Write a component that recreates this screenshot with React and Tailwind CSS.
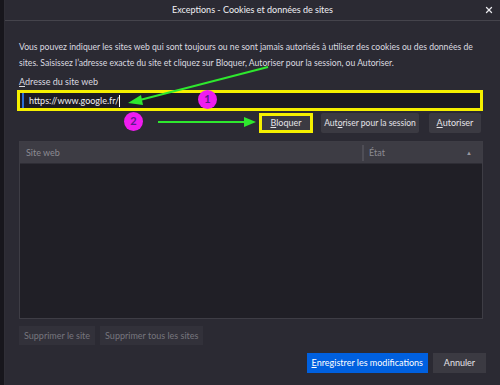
import { X } from "lucide-react";

export default function App() {
  return (
    <div className="w-[500px] h-[385px] bg-[#1c1b22] flex font-['Lato',sans-serif] text-[9px] text-[#e4e3e8] overflow-hidden">
      <div className="w-[5px] bg-[#17161c] border-r border-[#2f2e36]" />
      <div className="relative flex-1 bg-[#2b2a33] flex flex-col">
        {/* title bar */}
        <div className="h-[21px] flex items-center justify-center relative border-b border-[#45444c] bg-[#2b2a33]">
          <span className="text-[9px] text-[#f0f0f4]">Exceptions - Cookies et données de sites</span>
          <X className="absolute right-[6px] top-[5px] w-[10px] h-[10px] text-[#e8e8ec]" strokeWidth={3} />
        </div>

        <div className="pl-[14px] pr-[19px] pt-[18px] flex flex-col">
          <p className="leading-[16px] text-[8.6px] text-[#dcdbe0] mr-[-6px]">
            Vous pouvez indiquer les sites web qui sont toujours ou ne sont jamais autorisés à utiliser des cookies ou des données de sites. Saisissez l’adresse exacte du site et cliquez sur Bloquer, Autoriser pour la session, ou Autoriser.
          </p>

          <label className="mt-[4px] leading-[14px] text-[#dcdbe0]">
            <span className="underline">A</span>dresse du site web
          </label>

          <div className="mt-[1px] border-[3px] border-[#f5f000] mx-[-2px] h-[21px] flex items-center bg-[#1c1b22]">
            <div className="ml-[2px] pl-[5px] h-full flex items-center border-l-2 border-[#2a6fd6] text-[#f0f0f4]">
              https://www.google.fr/<span className="w-px h-[12px] bg-white" />
            </div>
          </div>

          <div className="mt-[2px] flex justify-end">
            <div className="border-[3px] border-[#f5f000] h-[20px] w-[54px] flex items-center justify-center bg-[#3b3a42]">
              <span><span className="underline">B</span>loquer</span>
            </div>
            <div className="ml-[8px] h-[20px] w-[98px] flex items-center justify-center bg-[#3b3a42] rounded-[2px] whitespace-nowrap text-[8.5px]">
              Aut<span className="underline">o</span>riser pour la session
            </div>
            <div className="ml-[10px] h-[20px] w-[52px] flex items-center justify-center bg-[#3b3a42] rounded-[2px]">
              <span className="underline">A</span>utoriser
            </div>
          </div>

          {/* table */}
          <div className="mt-[8px] h-[178px] border border-[#3e3d45] flex flex-col mr-[-2px]">
            <div className="h-[22px] bg-[#3d3c44] flex items-center text-[#8c8b93] border-b border-[#2e2d35]">
              <div className="flex-1 pl-[6px]">Site web</div>
              <div className="w-[120px] h-[16px] border-l-2 border-[#4f4e56] flex items-center justify-between pl-[5px] pr-[10px]">
                <span>État</span>
                <span className="text-[6px] text-[#9a99a1]">▲</span>
              </div>
            </div>
            <div className="flex-1 bg-[#201f26]" />
          </div>

          <div className="mt-[7px] flex gap-[5px]">
            <div className="h-[19px] px-[5px] flex items-center bg-[#32313a] text-[#77767e]">Supprimer le site</div>
            <div className="h-[19px] px-[5px] flex items-center bg-[#32313a] text-[#77767e]">Supprimer tous les sites</div>
          </div>

          <div className="mt-[8px] flex justify-end gap-[5px] mr-[-5px]">
            <div className="h-[20px] px-[5px] flex items-center bg-[#0060df] text-white">
              <span className="underline">E</span>nregistrer les modifications
            </div>
            <div className="h-[20px] w-[53px] flex items-center justify-center bg-[#3b3a42] text-[#e4e3e8]">Annuler</div>
          </div>
        </div>

        {/* annotations */}
        <svg className="absolute left-0 top-0 pointer-events-none" width="495" height="385">
          <line x1="263" y1="67" x2="131" y2="101" stroke="#2ee82e" strokeWidth="2" />
          <polygon points="123,103 136,95 138,105" fill="#2ee82e" />
          <line x1="153" y1="122" x2="243" y2="122" stroke="#2ee82e" strokeWidth="2" />
          <polygon points="251,122 239,117 239,127" fill="#2ee82e" />
        </svg>
        <div className="absolute left-[193px] top-[90px] w-[19px] h-[19px] rounded-full bg-[#f01cf0] flex items-center justify-center text-[#5a1a8a] text-[11px] font-bold">1</div>
        <div className="absolute left-[119px] top-[112px] w-[19px] h-[19px] rounded-full bg-[#f01cf0] flex items-center justify-center text-[#5a1a8a] text-[11px] font-bold">2</div>
      </div>
    </div>
  );
}
